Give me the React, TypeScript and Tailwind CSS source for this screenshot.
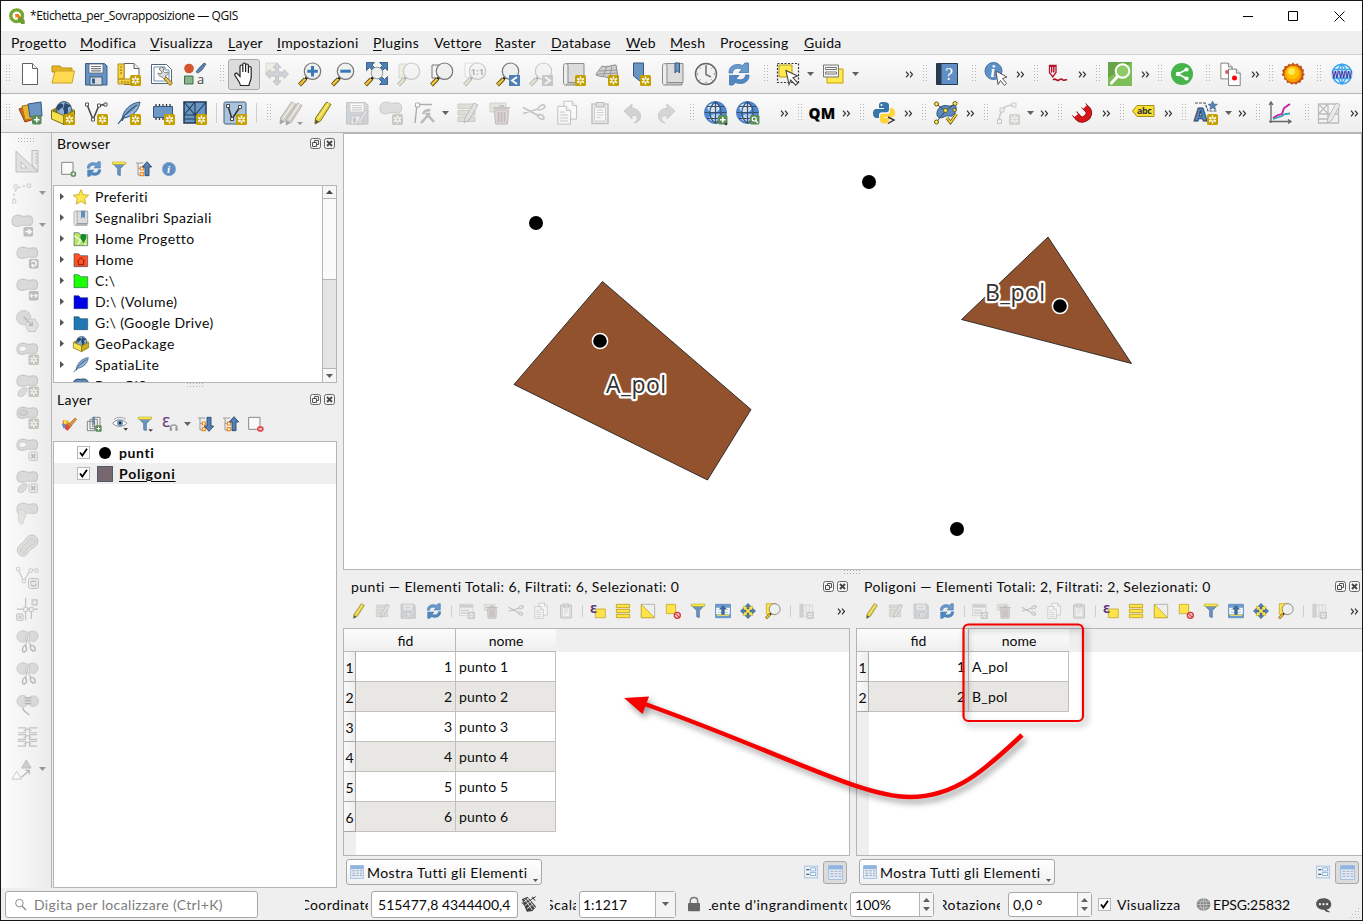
import React, { type ReactNode } from "react";

/* ---------- shared drawing parts ---------- */

const Spark = ({ x = 13, y = 13, c = "#c4a000" }: { x?: number; y?: number; c?: string }) => (
  <g transform={`translate(${x} ${y})`}>
    <rect width="11" height="11" rx="1.5" fill={c} />
    <path d="M5.5 1.6v7.8M2.1 3.5l6.8 4M8.9 3.5l-6.8 4" stroke="#fff" strokeWidth="1.5" />
    <circle cx="5.5" cy="5.5" r="1.2" fill={c} />
  </g>
);

const Plus = ({ x = 14, y = 14 }: { x?: number; y?: number }) => (
  <g transform={`translate(${x} ${y})`}>
    <rect width="9.5" height="9.5" rx="1.8" fill="#5a8c5a" />
    <path d="M4.75 2v5.5M2 4.75h5.5" stroke="#fff" strokeWidth="1.5" />
  </g>
);

const Handle = () => (
  <>
    <path d="M9 15.5L7 17.5" stroke="#222" strokeWidth="2.6" />
    <path d="M7.3 17L1.5 23" stroke="#55450a" strokeWidth="4" />
    <path d="M7.3 17L1.8 22.7" stroke="#f5c53a" strokeWidth="2.4" />
  </>
);

const Lens = ({ children, fill = "#eef0ee" }: { children?: ReactNode; fill?: string }) => (
  <>
    <Handle />
    <circle cx="14.5" cy="9.2" r="8.2" fill={fill} stroke="#777" strokeWidth="1.2" />
    {children}
  </>
);

const Blob = () => (
  <path
    d="M1 7.5C1 1.500 6.500 0 11 2C14 3.300 16.500 1.500 19 2C24 3 23.500 11.500 19 12C15.500 12.300 14 10.500 10.500 12C6 14 1 13 1 7.500z"
    fill="#bcc2bc"
    stroke="#98a098"
    strokeWidth="1.200"
  />
);

const Globe = () => (
  <>
    <circle cx="11.500" cy="11.500" r="11" fill="#4f8ad6" />
    <ellipse cx="9.500" cy="7" rx="6" ry="4.500" fill="#fff" opacity=".75" />
    <ellipse cx="12" cy="17" rx="7" ry="4" fill="#d3e6fb" opacity=".8" />
    <path
      d="M11.500.5v22M.5 11.500h22M2.800 5.500h17.400M2.800 17.500h17.400M11.500.5c-7.500 6-7.500 16 0 22M11.500.5c7.500 6 7.500 16 0 22"
      fill="none"
      stroke="#3a4f68"
      strokeWidth="1.200"
    />
    <circle cx="11.500" cy="11.500" r="11" fill="none" stroke="#3d6fb0" strokeWidth=".8" />
  </>
);

const Cursor = () => (
  <path d="M10 8.500l11.500 5.500-4.500 1.800 5 5.200-2.300 2.200-5-5.200-1.700 4.500z" fill="#fff" stroke="#444" strokeWidth="1.100" />
);

const Refresh = () => (
  <>
    <path d="M2 11C1.500 4 9 .5 15.500 3.500L18 1h3.500v9.500H12l3-3.200C11 5 5.500 6.500 5.500 11z" fill="#6a9bcc" stroke="#3f74ae" strokeWidth=".8" />
    <path d="M22 13c.5 7-7 10.500-13.500 7.500L6 23H2.500v-9.500H12l-3 3.200c4 2.300 9.500.8 9.500-3.700z" fill="#5288c0" stroke="#3f74ae" strokeWidth=".8" />
  </>
);

const Pencil = ({ f = "#e3cf3c" }: { f?: string }) => (
  <>
    <path d="M4.500 17L15.500 1l4.500 2.500L9.500 20 4 23z" fill={f} stroke="#827a24" strokeWidth="1" />
    <path d="M6.800 18L17.600 2.200" stroke="#fff59a" strokeWidth="1.200" />
    <path d="M4.500 18.500L4 23l4-2.300z" fill="#555" />
  </>
);

const Floppy = () => (
  <>
    <path d="M1.500 1.500h19l2.500 2.500v19H1.500z" fill="#6393c6" stroke="#3a5f8b" />
    <path d="M5 2h14v9H5z" fill="#fff" stroke="#567" strokeWidth=".8" />
    <path d="M7 4.500h10M7 6.700h10M7 8.900h10" stroke="#777" strokeWidth="1.200" />
    <path d="M6 15h12v8H6z" fill="#d9dde1" stroke="#345" strokeWidth=".8" />
    <path d="M8 16.500h3v5H8z" fill="#345f91" />
  </>
);

const Page = ({ x = 0, y = 0, s = 1 }: { x?: number; y?: number; s?: number }) => (
  <g transform={`translate(${x} ${y}) scale(${s})`}>
    <path d="M4.500 1.500h10l5 5v16h-15z" fill="#fff" stroke="#606060" />
    <path d="M14.500 1.500v5h5" fill="#eee" stroke="#606060" />
  </g>
);

const Trash = () => (
  <>
    <path d="M2 2h16v9H2z" fill="#d4d0a8" stroke="#aaa68a" />
    <path d="M6.500 9h14l-1 14h-12z" fill="#e0a8a8" stroke="#a76868" />
    <path d="M5 7h17M11 5h5M10.500 11v10M13.500 11v10M16.500 11v10" stroke="#a76868" strokeWidth="1.500" />
  </>
);

const Cut = () => (
  <path
    d="M1 6.500l15 8M1 12.500l15-4.500M16 14c2-1.500 6 .5 6 3s-5 1-6.500-2zM15.500 8.500C16 5 21 3 22.500 4.500s-2 5-6.500 4.500"
    fill="none"
    stroke="#888"
    strokeWidth="1.600"
  />
);

const EditRows = () => (
  <>
    <path d="M2 3h17v4.500H2zM2 9.500h17V14H2zM2 16h17v4.500H2z" fill="#c9c89e" stroke="#999a77" />
    <path d="M9 17L18 2l4 2-9 15-5 3z" fill="#ccc" stroke="#777" />
  </>
);

const Funnel = () => (
  <>
    <path d="M2 3h20l-8 8.500V22l-4-1.500v-9z" fill="#6a94c2" stroke="#4a709b" />
    <path d="M2 1.500h20V5H2z" fill="#fcec50" stroke="#b5a01e" strokeWidth=".8" />
  </>
);

const Globelet = () => (
  <>
    <path d="M.5 9L8 5l15.500 3.500-11 7.500z" fill="#8e8028" />
    <circle cx="13" cy="8" r="7.500" fill="#8fb1d8" stroke="#345" strokeWidth=".8" />
    <path d="M8 3c3-1 5 0 4 2.500s-3 1-4 4.500c-2-1-2.500-3-2-5zM14 1c1 3 5 1 6 5-2-1-4 0-3 3 1 2-1 4-3 6-2-3 0-5-2-7z" fill="#2b4a70" />
    <path d="M.5 9.500L13 14.500v9L.5 18z" fill="#f5e14d" stroke="#7c6c12" />
    <path d="M23.500 9.500L13 14.500v9l10.500-6z" fill="#cfae1c" stroke="#7c6c12" />
  </>
);

const Feather = () => (
  <>
    <path d="M5 20C5 10 13 2 23 1c-1 6-4 12-12 15l-4 1z" fill="#7fa6cf" stroke="#33597f" />
    <path d="M1 23C6 16 12 9 20 4" fill="none" stroke="#33506c" strokeWidth="1.100" />
    <path d="M8 15c5-1 9-4 12-9" stroke="#b9d0e8" fill="none" />
  </>
);

const Tree = ({ up }: { up?: boolean }) => (
  <>
    <path d="M0 3h11M3 3v18h4M3 11h4" fill="none" stroke="#999" strokeWidth="1.500" />
    <path d="M6.500 9h4.500v4.500H6.500zM6.500 17.500h4.500v4.500H6.500z" fill="#fff" stroke="#ee8a1c" strokeWidth="1.800" />
    {up ? (
      <path d="M16.500 1l7 8h-4v13h-6V9h-4z" fill="#5580b0" stroke="#1f4370" strokeWidth="1.300" />
    ) : (
      <path d="M16.500 23l7-8h-4V2h-6v13h-4z" fill="#5580b0" stroke="#1f4370" strokeWidth="1.300" />
    )}
  </>
);

const Clip = () => (
  <>
    <path d="M4 3h16v19.500H4z" fill="#ddd" stroke="#777" strokeWidth="1.500" />
    <path d="M6.500 6h11v14h-11z" fill="#fff" stroke="#999" />
    <path d="M8 1.500h8V6H8z" fill="#bbb" stroke="#666" />
    <path d="M8.500 9h7M8.500 11.500h7M8.500 14h7M8.500 16.500h4" stroke="#999" />
  </>
);

const Gray = ({ children, o = "opacity-35" }: { children: ReactNode; o?: string }) => (
  <g className={`grayscale-[70%] ${o}`}>{children}</g>
);

const Sheet = () => (
  <>
    <path d="M5 1.500h17v19H5z" fill="#dcdcdc" stroke="#8b8b8b" />
    <path d="M1.500 3.500C1.500 1 6 1 6 3.500V20c0 2-1 3-2.500 3s-2-1-2-3z" fill="#ececec" stroke="#8b8b8b" />
    <path d="M4 23h17v-2.500H6" fill="#c5c5c5" stroke="#8b8b8b" />
  </>
);

const TableGrid = () => (
  <>
    <path d="M1 1h22v22H1z" fill="#e4edf7" stroke="#9dbbdd" strokeWidth="1.500" />
    <path d="M1 1h22v6H1z" fill="#8fb5de" />
    <path d="M4 10h5M11 10h4M17 10h4M4 14h5M11 14h4M17 14h4M4 18h5M11 18h4M17 18h4" stroke="#9aa8b6" strokeWidth="1.800" />
  </>
);

const Folder = ({ f }: { f: string }) => (
  <path d="M1.500 2.500h7l3 3H22v16.500H1.500z" fill={f} stroke="#1c3a55" strokeOpacity=".65" strokeWidth="1.200" />
);

const Cross = ({ x = 13, y = 14 }: { x?: number; y?: number }) => (
  <g transform={`translate(${x} ${y})`}>
    <rect x=".5" y=".5" width="9" height="9" rx="1.500" fill="#e9dede" stroke="#a99" />
    <path d="M2.800 2.800l4.400 4.400M7.200 2.800L2.800 7.200" stroke="#a77" strokeWidth="1.600" />
  </g>
);

const Scis = () => (
  <>
    <path d="M11 1.500C5-1 1 3 1 7s4 7 9 5zM13.500 2c6-2 10 0 9.500 5s-6 6-9 4z" fill="#bcc2bc" stroke="#98a098" />
    <path d="M13 2l-3 15M12 10l4 7" stroke="#999" strokeWidth="1.300" />
    <path d="M10 16c-2 0-4 4-3 6s4 0 4-2zM15 16c3-1 6 3 5 5s-5 0-5-3z" fill="none" stroke="#a77" strokeWidth="1.600" />
  </>
);

const icons: Record<string, ReactNode> = {
  page: <Page />,
  folder: (
    <>
      <path d="M1 4h8l2 2h10v4H1z" fill="#e6b422" stroke="#b98e12" />
      <path d="M4 9h19.500l-2.500 12H1z" fill="#ffd94f" stroke="#c9a227" />
    </>
  ),
  floppy: <Floppy />,
  layout: (
    <>
      <Page x={2.500} s={1} />
      <path d="M1 2h6v15H1zM1 17h14v5H1z" fill="#f7d344" stroke="#b3901c" />
      <path d="M3 5h2M3 8h2M3 11h2M5 19v2M8 19v2M11 19v2" stroke="#8a6d0e" />
      <Spark />
    </>
  ),
  tools: (
    <>
      <path d="M1.500 2.500h15l5 5v14h-20z" fill="#fff" stroke="#567" />
      <path d="M4 5h11v3h4v11H4z" fill="none" stroke="#6c8fb8" />
      <path d="M9 7c1-2 4-2 5-1l-1 3 2 2 3-1c1 2-1 4-3 4L22 21l-2 2-8-8c-2 0-4-2-4-4l3 1 1-2z" fill="#ddd" stroke="#777" strokeWidth=".9" />
      <path d="M16 15l6.500 6-2.500 2.500-6-6.500z" fill="#e8bf49" stroke="#87681b" strokeWidth=".9" />
    </>
  ),
  style: (
    <>
      <circle cx="6" cy="6.500" r="4.800" fill="#d4552c" />
      <path d="M13 10l3-4 5-5 2 1-4 6-4 3z" fill="#5a83b0" stroke="#38567a" strokeWidth=".7" />
      <path d="M1.500 14h8.500v8H1.500z" fill="#8ab58a" stroke="#3f6f4a" />
      <text x="14" y="22" fontSize="13" fontFamily="Open Sans" fill="#444">a</text>
    </>
  ),
  hand: (
    <path
      d="M8 12V4.500c0-2 2.800-2 2.800 0V10 2.500c0-2 2.800-2 2.800 0V10 3.500c0-2 2.800-2 2.800 0V11 6c0-2 2.800-2 2.800 0v9c0 4-2 5.500-2.200 8.500H8.500C8 20 5 17 3 13.500c-1-2.200 1.500-3.200 3-1.200l2 2.200z"
      fill="#fff"
      stroke="#222"
      strokeWidth="1.200"
    />
  ),
  pan: (
    <Gray>
      <path d="M1 1h11v11H1z" fill="#efe06a" stroke="#999" />
      <path d="M12 1l4 4.500h-2.500v4.500H19V7.500l4.500 4.500-4.500 4.500V14h-5.500v5H16l-4 4.500L8 19h2.500v-5H5v2.500L.5 12 5 7.500V10h5.500V5.500H8z" fill="#7799c0" stroke="#4b6b91" />
    </Gray>
  ),
  zin: <Lens><path d="M14.500 4v10.500M9.300 9.200h10.500" stroke="#3c78b4" strokeWidth="3" /></Lens>,
  zout: <Lens><path d="M9.300 9.200h10.500" stroke="#3c78b4" strokeWidth="3" /></Lens>,
  zfull: (
    <>
      <path d="M2.500.5h8L8 3l4 4-2.500 2.500-4-4-3 3zM23.500.5v8L21 6l-4 4-2.500-2.500 4-4-3-3zM23.500 22.500h-8L18 20l-4-4 2.500-2.500 4 4 3-3z" fill="#4d80b5" stroke="#274d78" strokeWidth=".8" />
      <Handle />
      <circle cx="13" cy="11" r="5.800" fill="#eef0ee" stroke="#999" />
    </>
  ),
  zsel: <Gray><path d="M2 2h12v14H2z" fill="#f3e26c" stroke="#999" /><Lens /></Gray>,
  zlayer: <><path d="M2 3h11v13H2z" fill="#f4f4f4" stroke="#777" /><Lens /></>,
  znat: (
    <Gray>
      <path d="M2 1h13v14H2z" fill="#fff" stroke="#aaa" />
      <Lens><text x="7.500" y="13" fontSize="9.500" fontWeight="700" fontFamily="Open Sans" fill="#333">1:1</text></Lens>
    </Gray>
  ),
  zlast: <><Lens /><path d="M13 13h11v11H13z" fill="#4d80b5" /><path d="M21 15l-5 3.500 5 3.500" fill="none" stroke="#fff" strokeWidth="1.800" /></>,
  znext: <Gray><Lens /><path d="M13 13h11v11H13z" fill="#777" /><path d="M16 15l5 3.500-5 3.500" fill="none" stroke="#fff" strokeWidth="1.800" /></Gray>,
  newmap: <><Sheet /><Spark /></>,
  map3d: (
    <>
      <path d="M1 13C3 8 6 6 7 4c5 2 9-1 14-1l2 12-9 1c-4-2-9-1-13-3z" fill="#cfcfcf" stroke="#888" />
      <path d="M4 9l18-1M2.500 12l20-1M12 3.500L8 15M17 3L15 15" stroke="#999" fill="none" />
      <Spark />
    </>
  ),
  ribbon: <><path d="M3.500 1h10v20l-5-3-5-4z" fill="#6a94c2" stroke="#33597f" /><Spark x={10} /></>,
  bookmark: <><Sheet /><path d="M14 1h4.500v10l-2.250-2.500L14 11z" fill="#6a94c2" stroke="#33597f" /></>,
  clock: (
    <>
      <circle cx="12" cy="12" r="10.500" fill="#f1f1f1" stroke="#666" strokeWidth="1.400" />
      <path d="M12 4v8.500l5 2.500" fill="none" stroke="#777" strokeWidth="1.600" />
      <path d="M12 2.800v1.500M12 19.700v1.500M2.800 12h1.500M19.700 12h1.500M5.500 5.500l1 1M17.500 17.500l1 1M18.500 5.500l-1 1M5.500 18.500l1-1" stroke="#3f74ae" />
    </>
  ),
  refresh: <Refresh />,
  select: (
    <>
      <path d="M1.500 1.500h21v19h-21z" fill="none" stroke="#333" strokeWidth="1.200" strokeDasharray="2 1.500" />
      <path d="M3 3h13v12H3z" fill="#ffe94f" stroke="#b59f1b" />
      <Cursor />
    </>
  ),
  forms: (
    <>
      <path d="M5 7h16v14H5z" fill="#ffe94f" stroke="#c4a000" />
      <path d="M1.500 3h15v12h-15z" fill="#f4f4f4" stroke="#777" />
      <path d="M3.500 5.500h11v2h-11zM3.500 10h11v2h-11z" fill="#fff" stroke="#777" />
    </>
  ),
  help: (
    <>
      <path d="M1.500 1.500h21v21h-21z" fill="#5f8fc4" stroke="#26394d" />
      <path d="M2 2h4.500v20H2z" fill="#293b4e" />
      <text x="10" y="18" fontSize="16" fontFamily="DejaVu Serif" fill="#fff" textLength="8" lengthAdjust="spacingAndGlyphs">?</text>
    </>
  ),
  identify: (
    <>
      <circle cx="9.500" cy="9" r="8.500" fill="#5f90c6" stroke="#4474a8" />
      <text x="6.500" y="15" fontSize="16" fontStyle="italic" fontWeight="700" fontFamily="Liberation Serif" fill="#fff">i</text>
      <path d="M12 9l11 6-4.500 1.500 4 5-2 2-4-5-2.500 4z" fill="#fff" stroke="#555" />
    </>
  ),
  redpen: (
    <>
      <path d="M3.500 3.500h6.500v7l-3.250 4.500-3.250-4.500z" fill="#fff" stroke="#b01024" strokeWidth="1.300" />
      <path d="M5.700 3.500v7M7.800 3.500v7M3.500 4h6.500" stroke="#b01024" strokeWidth="1.400" />
      <path d="M7 18c3-3 3 2 6 0s2-1 4 0 2-1 4 0" fill="none" stroke="#b01024" strokeWidth="1.600" />
    </>
  ),
  greenmag: (
    <>
      <path d="M0 0h24v24H0z" fill="#7dbd57" />
      <path d="M0 0h24L0 16z" fill="#68a548" />
      <circle cx="14.500" cy="9" r="6.800" fill="#8ccb66" stroke="#fff" strokeWidth="2" />
      <path d="M9.500 14.500L3.500 21" stroke="#fff" strokeWidth="3.200" strokeLinecap="round" />
    </>
  ),
  share: (
    <>
      <circle cx="12" cy="12" r="11" fill="#45b549" />
      <path d="M16.500 7.500L8 12l8.500 4.500" fill="none" stroke="#fff" strokeWidth="1.600" />
      <circle cx="16.500" cy="7.500" r="2.100" fill="#fff" /><circle cx="8" cy="12" r="2.300" fill="#fff" /><circle cx="16.500" cy="16.500" r="2.100" fill="#fff" />
    </>
  ),
  docs: (
    <>
      <Page x={-1.500} y={0} s={0.75} />
      <circle cx="8" cy="10" r="2" fill="#e55" />
      <Page x={6} y={6} s={0.78} />
      <circle cx="15.500" cy="16" r="2.500" fill="#f00" />
    </>
  ),
  sun: (
    <>
      <path d="M12 .5l2 2 2.500-1.200L18 3.700l2.700.1.300 2.700 2.200 1.500-.9 2.500 1.500 2-1.700 2.100.6 2.600-2.500 1-.6 2.600-2.700-.1-1.700 2.100-2.300-1.400-2.300 1.400-2-2-2.600.1-.6-2.600-2.500-1 .6-2.600L.5 13l1.500-2.200L1 8.300l2.200-1.500.3-2.700 2.700-.1L7.700 1.700 10 2.500z" fill="#c2571a" />
      <circle cx="12" cy="12" r="8.500" fill="#ff9d00" />
      <circle cx="11.500" cy="11" r="6.500" fill="#ffc400" />
      <circle cx="10.500" cy="9.500" r="3.500" fill="#ffe95a" />
    </>
  ),
  www: (
    <>
      <circle cx="12" cy="12" r="9.800" fill="#e9f5ff" stroke="#39a2ea" strokeWidth="1.500" />
      <path d="M12 2v20M3 7.500h18M3 16.500h18M12 2c-6 6-6 14 0 20M12 2c6 6 6 14 0 20" stroke="#39a2ea" strokeWidth="1.300" fill="none" />
      <path d="M1.500 9h21v6h-21z" fill="#d5eaff" />
      <text x="2" y="15.500" fontSize="12" fontWeight="700" fontFamily="Liberation Sans" fill="#2a2a9c" textLength="20" lengthAdjust="spacingAndGlyphs">www</text>
    </>
  ),
  dsm: (
    <>
      <path d="M1 8l11-4 5 14-10 3z" fill="#d9642c" stroke="#963c12" />
      <path d="M4 5l12-2 2 14-11 2z" fill="#e9b22f" stroke="#a37913" />
      <path d="M10 3l13-2 1 14-12 1z" fill="#6a94c2" stroke="#33597f" />
      <Plus />
    </>
  ),
  gpkg: <><Globelet /><Spark /></>,
  vnew: (
    <>
      <path d="M3 3.500l6 15L15 4.500l6-1" fill="none" stroke="#444" strokeWidth="1.500" />
      <path d="M1.500 2h3v3h-3zM13.500 3h3v3h-3zM20 2h3v3h-3zM7.500 17h3v3h-3z" fill="#fff" stroke="#555" />
      <Spark />
    </>
  ),
  feather: <><Feather /><Spark /></>,
  chip: (
    <>
      <path d="M5 3v16M8.500 3v16M12 3v16M15.500 3v16M19 3v16" stroke="#333" strokeWidth="1.300" />
      <path d="M2.500 5.500h19v11h-19z" fill="#6d97c7" stroke="#33597f" />
      <Spark />
    </>
  ),
  mesh: (
    <>
      <path d="M1 1h22v21H1z" fill="#6a94c2" stroke="#203a58" strokeWidth="1.500" />
      <path d="M1 14h22M12 1v21M1 1l11 13M23 1L12 14M1 14L12 1M1 18h11" stroke="#203a58" strokeWidth="1.100" fill="none" />
      <Spark />
    </>
  ),
  virtual: (
    <>
      <rect x="1" y="1" width="22" height="22" rx="1.500" fill="#aac4de" stroke="#44617f" />
      <path d="M5 5l4 13L17 6" fill="none" stroke="#333" strokeWidth="1.600" />
      <path d="M3.500 3.500h3v3h-3zM15.500 4.500h3v3h-3zM7.500 16.500h3v3h-3z" fill="#fff" stroke="#444" />
      <Spark />
    </>
  ),
  pencils: (
    <>
      <Gray o="opacity-50"><g transform="translate(-3 0)"><Pencil f="#b8a8a0" /></g><g transform="translate(3 1)"><Pencil f="#b8a8a0" /></g></Gray>
      <path d="M18 21h6l-3 3z" fill="#999" />
    </>
  ),
  pencil: <Pencil />,
  floppyG: <Gray o="opacity-30"><Floppy /><path d="M13 20L20 9l3 1.500-7 11-4 2z" fill="#caa" stroke="#855" /></Gray>,
  blobStar: <Gray o="opacity-45"><Blob /><Spark c="#a79a62" /></Gray>,
  vertexTool: (
    <Gray o="opacity-45">
      <path d="M5 3.500L3 22M5 3.500h15" stroke="#555" strokeWidth="1.400" />
      <path d="M3.500 2h4v4h-4z" fill="#fff" stroke="#555" />
      <path d="M9 22l9-10M14 12l8 9M11 13c1-3 5-5 7-3" fill="none" stroke="#777" strokeWidth="2.600" />
    </Gray>
  ),
  editRows: <Gray o="opacity-45"><EditRows /></Gray>,
  trash: <Gray o="opacity-45"><Trash /></Gray>,
  cut: <Gray o="opacity-45"><Cut /></Gray>,
  copy: (
    <Gray o="opacity-40">
      <Page x={5} y={-1} s={0.85} />
      <Page x={-1} y={4} s={0.85} />
      <path d="M5 11h5M5 14h8M5 17h8M5 20h8" stroke="#888" />
    </Gray>
  ),
  clip: <Gray o="opacity-40"><Clip /></Gray>,
  undo: <Gray o="opacity-45"><path d="M3 10l8-7v4.500c10-.5 12 13 2 14.500 6-4 3-8-2-7.500V18z" fill="#b9a5a5" stroke="#999" /></Gray>,
  redo: <Gray o="opacity-45"><path d="M21 10l-8-7v4.500C3 7 1 20.500 11 22c-6-4-3-8 2-7.500V18z" fill="#a5b5a5" stroke="#999" /></Gray>,
  globeAdd: <><Globe /><Plus x={14} y={14} /><path d="M20 22.500h4l-2 2z" fill="#222" /></>,
  globeFind: (
    <>
      <Globe />
      <rect x="14" y="14" width="9.500" height="9.500" rx="1.500" fill="#5a8c5a" />
      <circle cx="18.200" cy="18" r="2" fill="none" stroke="#fff" strokeWidth="1.200" />
      <path d="M19.800 19.800l2.200 2.200" stroke="#fff" strokeWidth="1.300" />
    </>
  ),
  python: (
    <>
      <path d="M11.500 1C7 1 7 3 7 5v2h5v1H4.500C1.500 8 1 10.500 1 12.500S2 17 4.500 17H7v-3c0-2 1-2.800 3-2.800h4.500c1.500 0 2.500-1 2.500-2.700V4c0-2-2-3-5.500-3z" fill="#3775a9" />
      <path d="M12.500 22.500C17 22.500 17 20.500 17 18.500V17h-5v-1h7.500c3 0 3.500-2.500 3.500-4.500S22 7 19.500 7H18v3c0 2-1 2.800-3 2.800h-4.500C9 12.800 8 13.500 8 15.500V19c0 2 1.500 3.500 4.500 3.500z" fill="#ffd43b" />
      <circle cx="9.500" cy="4" r="1" fill="#fff" />
      <path d="M16 16l6 3-6 3.500" fill="none" stroke="#333" strokeWidth="1.400" />
    </>
  ),
  topo: (
    <>
      <path d="M3 14C2 7 9 3 14 5c3 1 5-2 7-1 3 4 0 9-3 11-2 1-3-1-6 0-4 2-8 3-9-1z" fill="#5a89bf" stroke="#2d5482" />
      <path d="M2.500 3l9 7 9-7M11.500 10L2.500 21" stroke="#444" fill="none" />
      <circle cx="2.500" cy="3" r="2" fill="#ffe94f" stroke="#665c10" /><circle cx="21" cy="2.500" r="2" fill="#ffe94f" stroke="#665c10" />
      <circle cx="11.500" cy="9.500" r="2" fill="#ffe94f" stroke="#665c10" /><circle cx="2.500" cy="21" r="2" fill="#ffe94f" stroke="#665c10" />
      <circle cx="20.500" cy="9" r="1.600" fill="#ffe94f" stroke="#665c10" />
      <path d="M13 17l3.500 4.500L22.500 13" fill="none" stroke="#55450a" strokeWidth="3" />
      <path d="M13 17l3.500 4.500L22.500 13" fill="none" stroke="#ffd93b" strokeWidth="1.500" />
    </>
  ),
  curveG: (
    <Gray>
      <path d="M3 20C4 8 9 4 18 4" fill="none" stroke="#777" strokeWidth="1.500" />
      <path d="M1.500 18.500h4v4h-4zM4 7h4v4H4zM16 2h4v4h-4z" fill="#eee" stroke="#777" />
      <Spark c="#a79a62" />
    </Gray>
  ),
  magnet: (
    <>
      <path d="M4.500 12.500L8.500 17C13 22 22.500 14 17.500 8.500L13.500 4.500" fill="none" stroke="#7d0d10" strokeWidth="6.400" />
      <path d="M4.500 12.500L8.500 17C13 22 22.500 14 17.500 8.500L13.500 4.500" fill="none" stroke="#d8151a" strokeWidth="5" />
      <path d="M4 12l2.200 2.500M13 4l2 2" stroke="#fff" strokeWidth="4.800" />
    </>
  ),
  abc: (
    <>
      <path d="M6 4.500h17v11H6L1.500 10z" fill="#f7df33" stroke="#a68f13" />
      <text x="6" y="13" fontSize="9" fontWeight="700" fontFamily="Open Sans" fill="#333" textLength="15">abc</text>
    </>
  ),
  aNew: (
    <>
      <path d="M1 2h10l3 8h9" fill="none" stroke="#456" strokeWidth="1.200" strokeDasharray="3 1" />
      <path d="M18.500 0l1.500 3 3.500.3-2.700 2.200.9 3.200-3.200-1.800-2.700 1.800.7-3.200L14 3.300l3.200-.3z" fill="#5a83b0" stroke="#33597f" strokeWidth=".5" />
      <text x="0" y="20" fontSize="18" fontWeight="800" fontFamily="Open Sans" fill="#5a86b8" stroke="#27496f" strokeWidth="1">A</text>
      <Spark />
    </>
  ),
  chart: (
    <>
      <path d="M3 22V2M1 20.500h21M1 4l2-3 2 3M20 18.500l3 2-3 2" fill="none" stroke="#666" strokeWidth="1.300" />
      <path d="M5 17l5-3 4-1 2-6 6-4" fill="none" stroke="#c7189e" strokeWidth="1.800" />
      <path d="M5 18l6-2 3-1 3-2 5-.5" fill="none" stroke="#37a3b0" strokeWidth="1.800" />
    </>
  ),
  meshEdit: (
    <Gray o="opacity-45">
      <path d="M1.500 3h20v19h-20zM1.500 13h20M11 3v19M1.500 3l10 10M11 3L1.500 13M1.500 18h10" fill="none" stroke="#777" strokeWidth="1.300" />
      <path d="M11 17L19 2l4 2-8 15-5 3z" fill="#ddd" stroke="#777" />
    </Gray>
  ),
  /* advanced digitizing column */
  setsquare: (
    <Gray o="opacity-50">
      <path d="M1 2v21h22z" fill="#d6cebe" stroke="#888" />
      <path d="M6 13v6h6z" fill="#f5f5f5" stroke="#888" />
      <path d="M17 1.500h6v21L17 16z" fill="#e8e0d0" stroke="#888" />
      <path d="M20 5h3M20 8h3M20 11h3M20 14h3" stroke="#888" />
    </Gray>
  ),
  arcG: (
    <Gray>
      <path d="M3 20C2 9 6 4 18 4" fill="none" stroke="#888" strokeDasharray="3 2" strokeWidth="1.500" />
      <path d="M1.500 18.500h3.500V22H1.500zM3 3h3.500v3.500H3zM17 2h3.500v3.500H17z" fill="#eee" stroke="#888" />
    </Gray>
  ),
  blobMove: <Gray o="opacity-50"><Blob /><rect x="13" y="13.500" width="10" height="10" rx="1.500" fill="#888" /><path d="M15 18.500h5M18 16l3 2.500-3 2.500" fill="none" stroke="#fff" strokeWidth="1.800" /></Gray>,
  blobRot: <Gray o="opacity-50"><Blob /><rect x="13.500" y="13.500" width="10" height="10" rx="1.500" fill="#888" /><path d="M16 17c2-3 6-1 5 2s-4 2-4 1M18 22l-1.500-2 2-1" fill="none" stroke="#fff" strokeWidth="1.500" /></Gray>,
  blobScale: <Gray o="opacity-50"><Blob /><rect x="13.500" y="13.500" width="10" height="10" rx="1.500" fill="#888" /><path d="M15.500 18.500h6M17 16.500l-2 2 2 2M20 16.500l2 2-2 2" fill="none" stroke="#fff" strokeWidth="1.200" /></Gray>,
  hex: (
    <Gray o="opacity-50">
      <circle cx="8" cy="8" r="7.500" fill="#bcc2bc" stroke="#98a098" />
      <path d="M13 9.500h7l3.500 6.500-3.500 6.500h-7L9.500 16z" fill="#ccd1cc" stroke="#98a098" />
      <path d="M8 7l9 9M17 12v4h-4" fill="none" stroke="#777" strokeWidth="1.300" />
    </Gray>
  ),
  ring: <Gray o="opacity-50"><Blob /><ellipse cx="7" cy="7" rx="4" ry="3" fill="#f5f5f5" stroke="#98a098" /><Spark c="#a79a62" /></Gray>,
  part: <Gray o="opacity-50"><Blob /><path d="M2 22c0-5 4-8 9-7.500 2 2-2 8.500-5 9s-4-1-4-1.500z" fill="#bcc2bc" stroke="#98a098" /><Spark c="#a79a62" /></Gray>,
  fillRing: <Gray o="opacity-50"><Blob /><ellipse cx="7.500" cy="7" rx="4.500" ry="3" fill="#aab0aa" stroke="#868e86" /><Spark c="#a79a62" /></Gray>,
  ringDel: <Gray o="opacity-50"><Blob /><ellipse cx="7" cy="7" rx="4" ry="3" fill="#f5f5f5" stroke="#98a098" /><Cross /></Gray>,
  partDel: <Gray o="opacity-50"><Blob /><path d="M2 22c0-5 4-8 9-7.500 2 2-2 8.500-5 9s-4-1-4-1.500z" fill="#bcc2bc" stroke="#98a098" /><Cross /></Gray>,
  reshape: <Gray o="opacity-45"><Blob /><path d="M2 9c2-2 7-1 8 3s-2 4-2 8-4 4-5 0 0-5-1-11z" fill="#cfcfb4" stroke="#a6a68a" /></Gray>,
  offset: (
    <Gray o="opacity-50">
      <path d="M3 21C-1 16 3 12 7 9C10 7 11 1 17 1C24 2 24 10 20 13C17 15 14 16 12 20C10 24 6 24 3 21z" fill="#cfcfb4" stroke="#8e8e72" />
      <path d="M5 19C3 16 6 13 9 11C12 9 13 4 17 4C21 5 21 9 18 11C15 13 12 14 10 18C9 21 7 21 5 19z" fill="#bcc2bc" stroke="#98a098" />
    </Gray>
  ),
  simp: (
    <Gray>
      <path d="M2 3l6 13 7-12 7 0" fill="none" stroke="#888" strokeWidth="1.300" />
      <path d="M.5 1.500H4V5H.5zM13.500 3H17v3.500h-3.500zM20 3h3v3.500h-3zM6.500 14H10v3.500H6.500z" fill="#eee" stroke="#888" />
      <rect x="13" y="13" width="10.500" height="10.500" rx="2" fill="#ddd" stroke="#666" /><path d="M15 18c1-3 5-3 6-1M21.500 18.500c-1 3-5 3-6 1" stroke="#666" fill="none" strokeWidth="1.500" />
    </Gray>
  ),
  crossLines: (
    <Gray o="opacity-45">
      <path d="M10 0v23M1 11.500h22M16 11v11" stroke="#888" strokeWidth="1.300" />
      <path d="M8 10h4v4H8zM14 10h4v4h-4z" fill="#eee" stroke="#888" />
      <rect x="16" y="1" width="7" height="7" rx="1" fill="#aaa88c" /><path d="M19.500 2.500v4M17.500 4.500h4" stroke="#fff" />
      <rect x=".5" y="16.500" width="7" height="7" rx="1" fill="#d9c9c9" stroke="#a88" /><path d="M2.500 18.500l3 3M5.500 18.500l-3 3" stroke="#a77" />
    </Gray>
  ),
  scis: <Gray o="opacity-50"><Scis /></Gray>,
  merge: <Gray o="opacity-50"><circle cx="7" cy="7.500" r="6" fill="#bcc2bc" stroke="#98a098" /><circle cx="18" cy="7.500" r="5.500" fill="#bcc2bc" stroke="#98a098" /><path d="M9 4h7M9 7h7M9 10h7M7 14c0 4 4 5 7 8" fill="none" stroke="#777" strokeWidth="1.300" /></Gray>,
  snapRows: <Gray o="opacity-45"><path d="M2 2h8v5H2M22 2h-8v5h8M2 9h8v5H2M22 9h-8v5h8M2 16h8v5H2M22 16h-8v5h8M8 5l4-2 4 2M8 12l4-2 4 2M8 19l4-2 4 2" fill="none" stroke="#888" strokeWidth="1.200" /></Gray>,
  triMove: <Gray o="opacity-50"><path d="M16 2l5 8.500H11z" fill="#aaa" stroke="#888" /><path d="M6 14l5 8H1z" fill="#fff" stroke="#999" /><path d="M11 20l8-7M15 13h4v4" fill="none" stroke="#777" strokeWidth="1.300" /></Gray>,
  /* small panel icons */
  addLayer: <><path d="M1 2h17v18H1z" fill="#fafafa" stroke="#777" strokeWidth="1.300" /><circle cx="18.500" cy="19.500" r="4.300" fill="#5a8c5a" /><path d="M18.500 17v5M16 19.500h5" stroke="#fff" strokeWidth="1.300" /></>,
  removeLayer: <><path d="M1 2h17v18H1z" fill="#fafafa" stroke="#777" strokeWidth="1.300" /><rect x="13.500" y="15.500" width="10" height="8" rx="3.500" fill="#e0484c" /><path d="M16 19.500h5" stroke="#fff" strokeWidth="1.800" /></>,
  funnel: <Funnel />,
  funnelD: <><Funnel /><path d="M17 20h7l-3.500 3.500z" fill="#444" /></>,
  treeUp: <Tree up />,
  treeDown: <Tree />,
  info: <><circle cx="12" cy="12" r="10" fill="#5f8fc4" stroke="#7ba5d2" /><text x="9" y="18" fontSize="17" fontStyle="italic" fontWeight="700" fontFamily="Liberation Serif" fill="#fff">i</text></>,
  star: <path d="M12 1l3.300 7.500 8.200.8-6.200 5.400 1.900 8L12 18.500l-7.200 4.200 1.900-8L.5 9.300l8.200-.8z" fill="#fde84e" stroke="#c9a51a" strokeWidth="1.300" />,
  segn: <><Sheet /><path d="M12 1h6v12l-3-3-3 3z" fill="#5f8fc4" /></>,
  homeProj: <><Folder f="#b9e36c" /><path d="M2 7l18 14M7 20l8-12" stroke="#f3fbd0" strokeWidth="2" /><circle cx="15.500" cy="9" r="4.500" fill="#158a2c" /><path d="M11.500 11l4 8 4-8z" fill="#158a2c" /></>,
  home: <><Folder f="#ff5126" /><path d="M6 14l6-5.500 6 5.500M8 13v6h8v-6" fill="none" stroke="#6d1a08" strokeWidth="1.300" /></>,
  cdrive: <Folder f="#1cff00" />,
  ddrive: <Folder f="#0000e6" />,
  gdrive: <Folder f="#1f78b4" />,
  gpkgS: <Globelet />,
  featherS: <Feather />,
  elephant: <path d="M1 6c1-4 6-5 10-4 5-1 11-1 12 5l-2 14h-5l-4-3-3 3-6-6z" fill="#5c86b3" stroke="#26466a" strokeWidth="1.500" />,
  brush: (
    <>
      <path d="M12 12L21 3l2.500 2L15 15z" fill="#d99a43" stroke="#9c651d" />
      <path d="M3 6l8 1 5 8-6 7C5 20 1 13 3 6z" fill="#dc4a3f" />
      <path d="M4 6l7 1 2 4-8 2c-1-2-2-5-1-7z" fill="#f9dc41" />
      <path d="M1 12l5 0 1 5-3 2z" fill="#5b8fd0" />
      <path d="M9 8l7 7-2 2.500L8 11z" fill="#c98a3a" />
    </>
  ),
  addGroup: <><path d="M2 8h11v14H2zM6 5h11v14H6zM10 2h11v14H10z" fill="#f1f1f1" stroke="#777" strokeWidth="1.300" /><path d="M12 1v12" stroke="#3f74ae" strokeWidth="2" /><Plus /></>,
  eye: <><path d="M1 11C6 4 17 4 22 11c-5 6-16 6-21 0z" fill="#fff" stroke="#888" strokeWidth="1.500" /><circle cx="12" cy="10.500" r="4.500" fill="#6a94c2" /><circle cx="12" cy="10.500" r="1.800" fill="#222" /><path d="M3 5C8 1 16 1 21 5" fill="none" stroke="#999" strokeWidth="1.300" /><path d="M17 18h7l-3.500 4z" fill="#444" /></>,
  epsHead: <><text x="0" y="16" fontSize="26" fontFamily="Noto Sans" fill="#6b3c7d">ε</text><path d="M12.500 22v-4c0-6 10-6 10 0v4M14 17v5M21 17v5" fill="none" stroke="#999" strokeWidth="2" /></>,
  newRow: <Gray><path d="M1 2h20v17H1z" fill="#eee" stroke="#888" /><path d="M1 2h20v5H1z" fill="#999" /><path d="M3 11h12M3 15h12" stroke="#999" strokeWidth="2" /><Spark c="#888" /></Gray>,
  epsSel: <><path d="M8 9h15v13H8z" fill="#ffe34a" stroke="#b99b14" /><text x="0" y="15" fontSize="22" fontWeight="600" fontFamily="Noto Sans" fill="#5d3476">ε</text></>,
  allRows: <path d="M2 2h20v5H2zM2 9.500h20v5H2zM2 17h20v5H2z" fill="#ffe34a" stroke="#b99b14" strokeWidth="1.200" />,
  invert: <><path d="M2 2h20v20H2z" fill="#eee" stroke="#999" /><path d="M2 2l20 20H2z" fill="#ffe34a" stroke="#b99b14" /></>,
  desel: <><path d="M2 2h14v14H2z" fill="#ffe34a" stroke="#b99b14" /><circle cx="18.500" cy="18.500" r="4.500" fill="#f6d0d0" stroke="#d5353b" strokeWidth="2" /><path d="M15.500 15.500l6 6" stroke="#d5353b" strokeWidth="1.600" /></>,
  moveTop: <><path d="M1 2h22v20H1z" fill="#fff" stroke="#5588bb" strokeWidth="1.500" /><path d="M1 2h22v5H1zM1 17h22v5H1z" fill="#6a9bcc" /><path d="M4 10h16M4 14h16" stroke="#b9cde2" strokeWidth="2" /><path d="M3 18.500h18" stroke="#e9d95a" strokeWidth="2" /><path d="M12 4l5 5h-3v8h-4V9H7z" fill="#3b6ea5" stroke="#234" strokeWidth=".6" /></>,
  panSel: <><path d="M5 5h14v14H5z" fill="#ffe34a" stroke="#c9b02b" /><path d="M12 .5l4 4.500h-2.500v4h-3V5H8zM12 23.500l4-4.500h-2.500v-4h-3v4H8zM.5 12L5 8v2.500h4v3H5V16zM23.500 12L19 8v2.500h-4v3h4V16z" fill="#4f7fb3" stroke="#2d5482" strokeWidth=".7" /></>,
  zoomSel: <><path d="M2 1h14v16H2z" fill="#ffe34a" stroke="#b99b14" /><Lens /></>,
  newCol: <Gray><path d="M2 1h6v21H2z" fill="#999" /><path d="M8 3h14v17H8zM12 3v17M17 3v17" fill="#eee" stroke="#888" /><Spark c="#888" /></Gray>,
  table: <TableGrid />,
  form: <><path d="M1 2h22v20H1z" fill="#eef4fa" stroke="#9dbbdd" strokeWidth="1.500" /><path d="M4 8h5M4 16h5" stroke="#555" strokeWidth="2" /><path d="M11 5h9v5h-9zM11 13h9v5h-9z" fill="#fff" stroke="#7da7d6" strokeWidth="1.500" /></>,
  satellite: (
    <>
      <path d="M2 5l8-3 12 14-5 6-8 1z" fill="#444" stroke="#222" />
      <path d="M5 4l12 17M9 3l12 15M4 9l8-5M6 14l9-6M9 19l9-7" stroke="#eee" strokeWidth="1.300" />
      <path d="M14 6l8-5M17 1l4 6M1 10l4 3" stroke="#333" strokeWidth="1.500" />
    </>
  ),
  lock: <><path d="M6.500 11V7.500c0-7 11-7 11 0V11" fill="none" stroke="#777" strokeWidth="2.200" /><rect x="3" y="10.500" width="18" height="12.500" rx="1.500" fill="#666" /></>,
  crs: <><ellipse cx="12" cy="12" rx="11" ry="10" fill="#888" /><path d="M12 2v20M1 12h22M3 7h18M4 17h16M12 2c-7 6-7 14 0 20M12 2c7 6 7 14 0 20" fill="none" stroke="#ccc" strokeWidth="1.100" /></>,
  bubble: <><path d="M12 3c14 0 14 15 4 16l6 4c-5 .5-8-1-9-3.500C-2 19-2 3 12 3z" fill="#555" /><circle cx="7" cy="11.500" r="1.600" fill="#eee" /><circle cx="12" cy="11.500" r="1.600" fill="#eee" /><circle cx="17" cy="11.500" r="1.600" fill="#eee" /></>,
  search: <><circle cx="10" cy="9.500" r="7" fill="none" stroke="#888" strokeWidth="1.800" /><path d="M15 15l7 7" stroke="#888" strokeWidth="2.500" /></>,
  qgis: (
    <>
      <circle cx="11.500" cy="11.500" r="8.800" fill="none" stroke="#76a832" strokeWidth="5" />
      <path d="M13 13h5.500l5 5.500V24h-5L13 18z" fill="#6a9c30" />
      <path d="M9 9h5l4 5-3 2-3-3-2 2z" fill="#ee7913" />
    </>
  ),
};

const Icon = ({ n, s = "size-6" }: { n: string; s?: string }) => (
  <svg viewBox="0 0 24 24" className={`${s} shrink-0 overflow-visible`}>{icons[n]}</svg>
);

/* ---------- toolbar primitives ---------- */

const Grip = () => (
  <svg className="h-[18px] w-1 shrink-0" viewBox="0 0 4 18">
    <path d="M.5 0v18M3.500 0v18" stroke="#b5b5b5" strokeDasharray="1 2" />
  </svg>
);
const HGrip = () => (
  <svg className="h-1 w-[17px] shrink-0" viewBox="0 0 17 4">
    <path d="M0 .5h17M0 3.500h17" stroke="#b5b5b5" strokeDasharray="1 2" />
  </svg>
);
const Down = () => (
  <svg className="h-1 w-[7px] shrink-0" viewBox="0 0 7 4"><path d="M0 0h7L3.500 4z" fill="#606060" /></svg>
);
const More = () => (
  <svg className="h-[7px] w-[9px] shrink-0" viewBox="0 0 9 7">
    <path d="M1 .7l2.500 2.800L1 6.300M5 .7l2.500 2.800L5 6.300" fill="none" stroke="#333" strokeWidth="1.200" />
  </svg>
);
const Sep = () => <div className="h-5 w-px shrink-0 bg-[#cfcfcf]" />;
const ShortSep = () => <div className="h-3 w-px shrink-0 bg-[#cfcfcf]" />;

type Item = [string, string];

/* each slot is as wide as the step from the previous item's centre */
const Bar = ({ items, size = "size-6" }: { items: Item[]; size?: string }) => (
  <>
    {items.map(([n, w], i) => (
      <div key={i} className={`flex h-full shrink-0 items-center justify-end ${w}`}>
        <div className="flex w-0 items-center justify-center">
          {n === "|" ? <Grip /> : n === ">" ? <More /> : n === "v" ? <Down /> : n === "-" ? <Sep /> : n === "_" ? <ShortSep /> : n === "QM" ? (
            <span className="font-['Open_Sans'] text-[15px] font-extrabold leading-none tracking-[0.3px] text-black">QM</span>
          ) : n === "hand" ? (
            <div className="flex h-[31px] w-8 shrink-0 items-center justify-center rounded-[3px] border border-[#a9a9a9] bg-[#dcdcdc]"><Icon n="hand" /></div>
          ) : (
            <Icon n={n} s={size} />
          )}
        </div>
      </div>
    ))}
  </>
);

const row1: Item[] = [
  ["|", "w-2"], ["page", "w-[22px]"], ["folder", "w-[33px]"], ["floppy", "w-[33px]"], ["layout", "w-[33px]"], ["tools", "w-[33px]"], ["style", "w-[33px]"],
  ["|", "w-[27px]"], ["hand", "w-[22px]"], ["pan", "w-[33px]"], ["zin", "w-[33px]"], ["zout", "w-[33px]"], ["zfull", "w-[33px]"], ["zsel", "w-[33px]"], ["zlayer", "w-[33px]"],
  ["znat", "w-[33px]"], ["zlast", "w-[33px]"], ["znext", "w-[33px]"], ["newmap", "w-[33px]"], ["map3d", "w-[33px]"], ["ribbon", "w-[35px]"], ["bookmark", "w-[31px]"],
  ["clock", "w-[33px]"], ["refresh", "w-[33px]"], ["|", "w-[27px]"], ["select", "w-[22px]"], ["v", "w-[22px]"], ["forms", "w-[24px]"], ["v", "w-[21px]"], [">", "w-[54px]"],
  ["|", "w-[16px]"], ["help", "w-[22px]"], ["|", "w-[27px]"], ["identify", "w-[22px]"], [">", "w-[24px]"], ["|", "w-[16px]"], ["redpen", "w-[22px]"], [">", "w-[24px]"],
  ["|", "w-[16px]"], ["greenmag", "w-[22px]"], [">", "w-[25px]"], ["|", "w-[15px]"], ["share", "w-[22px]"], ["|", "w-[26px]"], ["docs", "w-[23px]"], [">", "w-[24px]"],
  ["|", "w-[16px]"], ["sun", "w-[22px]"], ["|", "w-[26px]"], ["www", "w-[23px]"],
];
const row2: Item[] = [
  ["|", "w-2"], ["dsm", "w-[22px]"], ["gpkg", "w-[33px]"], ["vnew", "w-[33px]"], ["feather", "w-[33px]"], ["chip", "w-[34px]"], ["mesh", "w-[32px]"], ["-", "w-[21px]"],
  ["virtual", "w-[19px]"], ["-", "w-[21px]"], ["|", "w-[13px]"], ["pencils", "w-[22px]"], ["pencil", "w-[32px]"], ["floppyG", "w-[34px]"], ["blobStar", "w-[34px]"],
  ["vertexTool", "w-[33px]"], ["v", "w-[21px]"], ["editRows", "w-[23px]"], ["trash", "w-[32px]"], ["cut", "w-[34px]"], ["copy", "w-[33px]"], ["clip", "w-[33px]"],
  ["undo", "w-[33px]"], ["redo", "w-[33px]"], ["|", "w-[26px]"], ["globeAdd", "w-[24px]"], ["globeFind", "w-[32px]"], [">", "w-[36px]"], ["|", "w-[16px]"], ["QM", "w-[22px]"],
  [">", "w-[24px]"], ["|", "w-[16px]"], ["python", "w-[22px]"], [">", "w-[24px]"], ["|", "w-[16px]"], ["topo", "w-[22px]"], [">", "w-[24px]"], ["|", "w-[16px]"],
  ["curveG", "w-[22px]"], ["v", "w-[22px]"], [">", "w-[14px]"], ["|", "w-[16px]"], ["magnet", "w-[22px]"], [">", "w-[24px]"], ["|", "w-[16px]"], ["abc", "w-[21px]"],
  [">", "w-[25px]"], ["|", "w-[16px]"], ["aNew", "w-[22px]"], ["v", "w-[22px]"], [">", "w-[14px]"], ["|", "w-[16px]"], ["chart", "w-[22px]"], ["|", "w-[27px]"],
  ["meshEdit", "w-[22px]"], [">", "w-[25px]"],
];
const tableBar: Item[] = [
  ["pencil", "w-[16px]"], ["editRows", "w-[24px]"], ["floppyG", "w-[25px]"], ["refresh", "w-[26px]"], ["_", "w-[17px]"], ["newRow", "w-[16px]"], ["trash", "w-[24px]"],
  ["cut", "w-[25px]"], ["copy", "w-[25px]"], ["clip", "w-[25px]"], ["_", "w-[16px]"], ["epsSel", "w-[16px]"], ["allRows", "w-[25px]"], ["invert", "w-[25px]"], ["desel", "w-[25px]"],
  ["funnel", "w-[25px]"], ["moveTop", "w-[25px]"], ["panSel", "w-[25px]"], ["zoomSel", "w-[25px]"], ["_", "w-[17px]"], ["newCol", "w-[16px]"], [">", "w-[35px]"],
];
const side = [
  "arcG", "blobMove", "blobRot", "blobScale", "hex", "ring", "part", "fillRing", "ringDel", "partDel", "reshape", "offset", "simp", "crossLines", "scis", "scis", "merge", "snapRows", "triMove",
];

const menu: [string, string, string, string][] = [
  ["P", "r", "ogetto", "w-[69px]"], ["", "M", "odifica", "w-[70px]"], ["", "V", "isualizza", "w-[78px]"], ["", "L", "ayer", "w-[49px]"], ["", "I", "mpostazioni", "w-[96px]"],
  ["", "P", "lugins", "w-[61px]"], ["Vett", "o", "re", "w-[61px]"], ["", "R", "aster", "w-[56px]"], ["", "D", "atabase", "w-[75px]"], ["", "W", "eb", "w-[44px]"],
  ["", "M", "esh", "w-[50px]"], ["Pro", "c", "essing", "w-[84px]"], ["", "G", "uida", "w-[60px]"],
];

const DockButtons = () => (
  <div className="flex gap-[3px]">
    <svg className="size-[11px]" viewBox="0 0 11 11">
      <rect x=".5" y=".5" width="10" height="10" rx="2" fill="#f4f4f4" stroke="#666" />
      <path d="M4.500 5V2.500h4v4H6M2.500 4.500h4v4h-4z" fill="none" stroke="#555" />
    </svg>
    <svg className="size-[11px]" viewBox="0 0 11 11">
      <rect x=".5" y=".5" width="10" height="10" rx="2" fill="#f4f4f4" stroke="#666" />
      <path d="M3 3l5 5M8 3L3 8" stroke="#444" strokeWidth="1.800" />
    </svg>
  </div>
);

const tree: [string, string][] = [
  ["star", "Preferiti"], ["segn", "Segnalibri Spaziali"], ["homeProj", "Home Progetto"], ["home", "Home"], ["cdrive", "C:\\"], ["ddrive", "D:\\ (Volume)"],
  ["gdrive", "G:\\ (Google Drive)"], ["gpkgS", "GeoPackage"], ["featherS", "SpatiaLite"], ["elephant", "PostGIS"],
];

const Check = () => (
  <span className="flex size-[13px] shrink-0 items-center justify-center border border-[#b8b8b8] bg-white">
    <svg className="size-[9px]" viewBox="0 0 9 9"><path d="M1 4.500l2.300 3L8 .8" fill="none" stroke="#000" strokeWidth="1.800" /></svg>
  </span>
);

const AttributeTable = ({ title, rows, wide }: { title: string; rows: string[]; wide?: boolean }) => (
  <section className="flex w-[507px] shrink-0 flex-col">
    <div className={`flex h-[24px] items-center justify-between pl-2 ${wide ? "pr-[3px]" : "pr-[2px]"}`}>
      <span className="text-[14px] tracking-[0.42px]">{title}</span>
      <DockButtons />
    </div>
    <div className="flex h-[30px] items-center pb-1">
      <Bar items={tableBar} size="size-4" />
    </div>
    <div className="h-[228px] border border-[#b5b5b5] bg-white">
      <div className="flex h-[23px] bg-[#efefef]">
        <div className="w-[112px] border-b border-r border-[#b8b8b8] bg-linear-to-b from-[#fcfcfc] to-[#efefef] pl-3 text-center leading-[23px]">fid</div>
        <div className="w-[100px] border-b border-[#b8b8b8] bg-linear-to-b from-[#fcfcfc] to-[#efefef] text-center leading-[23px]">nome</div>
      </div>
      <div className="flex h-[203px]">
        <div className="w-3 bg-[#efefef]">
          {rows.map((r, i) => (
            <div key={r} className="h-[30px] border-b border-r border-[#a9a9a9] bg-linear-to-r from-[#fafafa] to-[#eee] pt-[2px] text-center leading-[28px]">{i + 1}</div>
          ))}
        </div>
        <div className="w-[200px]">
          {rows.map((r, i) => (
            <div key={r} className={`flex h-[30px] border-b border-[#c3c1bd] leading-[29px] ${i % 2 ? "bg-[#e9e7e3]" : "bg-white"}`}>
              <div className="w-[100px] border-r border-[#c3c1bd] pr-[3px] text-right">{i + 1}</div>
              <div className="w-[100px] border-r border-[#c3c1bd] pl-[3px] tracking-[0.2px]">{r}</div>
            </div>
          ))}
        </div>
      </div>
    </div>
    <div className={`flex h-[32px] items-center justify-between pl-[3px] ${wide ? "pr-1" : "pr-[3px]"}`}>
      <div className="flex h-[26px] w-[196px] items-center rounded-[3px] border border-[#a8a8a8] bg-linear-to-b from-white to-[#f0f0f0] pl-[3px]">
        <Icon n="table" s="size-[14px]" />
        <span className="ml-[3px] w-[166px] shrink-0 whitespace-nowrap text-[14px] tracking-[0.43px]">Mostra Tutti gli Elementi</span>
        <svg className="mt-4 h-[3px] w-[5px] shrink-0" viewBox="0 0 5 3"><path d="M0 0h5L2.500 3z" fill="#555" /></svg>
      </div>
      <div className="flex items-center gap-[5px]">
        <Icon n="form" s="size-[14px]" />
        <div className="flex h-[23px] w-6 items-center justify-center rounded-[3px] border border-[#a9a9a9] bg-[#dcdcdc]"><Icon n="table" s="size-[15px]" /></div>
      </div>
    </div>
  </section>
);

const Spin = () => (
  <div className="flex h-full w-[14px] flex-col items-center justify-center gap-[5px] border-l border-[#b5b5b5] bg-[#f6f6f6]">
    <svg className="h-1 w-[7px]" viewBox="0 0 7 4"><path d="M0 4h7L3.500 0z" fill="#606060" /></svg>
    <Down />
  </div>
);

/* fixed-width label whose text is centred and clipped on both sides */
const Clipped = ({ w, children }: { w: string; children: ReactNode }) => (
  <div className={`flex shrink-0 justify-center overflow-hidden whitespace-nowrap ${w}`}><span className="shrink-0">{children}</span></div>
);

const MapLabel = ({ x, y, children }: { x: number; y: number; children: string }) => (
  <text x={x} y={y} fontSize="23" fontFamily="Open Sans, Noto Sans, sans-serif" fill="#333" stroke="#fff" strokeWidth="4.500" strokeLinejoin="round" paintOrder="stroke" textLength="60">{children}</text>
);

export default function App() {
  return (
    <div className="relative flex h-[921px] w-[1363px] flex-col overflow-hidden border border-[#18171a] bg-[#efefef] font-['Lato',sans-serif] text-[14px] text-[#0a0a0a]">
      <header className="flex h-[30px] shrink-0 items-center bg-white pl-2">
        <Icon n="qgis" s="size-4" />
        <span className="ml-[5px] flex-1 font-['Open_Sans',sans-serif] text-[12px] tracking-[-0.42px]">*Etichetta_per_Sovrapposizione — QGIS</span>
        <svg className="mr-4 h-[11px] w-[103px]" viewBox="0 0 103 11">
          <path d="M0 5.500h10M45.500.5h9v9h-9zM91.500.5l10 10M101.500.5l-10 10" fill="none" stroke="#000" />
        </svg>
      </header>
      <nav className="flex h-6 shrink-0 items-center border-b border-[#d0d0d0] pl-[10px]">
        {menu.map(([a, u, b, w], i) => (
          <span key={i} className={`shrink-0 whitespace-nowrap text-[14px] tracking-[0.3px] ${w}`}>{a}<span className="underline underline-offset-2">{u}</span>{b}</span>
        ))}
      </nav>
      <div className="flex h-[39px] shrink-0 items-center overflow-hidden border-b border-[#b5b5b5] bg-linear-to-b from-[#fbfbfb] to-[#eee]"><div className="-ml-px flex h-full items-center"><Bar items={row1} /></div></div>
      <div className="flex h-[39px] shrink-0 items-center overflow-hidden border-b border-[#b5b5b5] bg-linear-to-b from-[#fbfbfb] to-[#eee]"><div className="-ml-px flex h-full items-center"><Bar items={row2} /></div></div>

      <main className="flex h-[755px] shrink-0">
        <aside className="flex w-[51px] shrink-0 flex-col items-center border-r border-[#b5b5b5] bg-linear-to-r from-[#fcfcfc] to-[#ececec] pt-[5px]">
          <HGrip />
          <div className="mt-[3px] flex h-8 w-full items-center pl-[14px]"><Icon n="setsquare" /></div>
          {side.map((n, i) => (
            <div key={i} className={`flex h-8 w-full shrink-0 items-center ${i < 2 || i === 18 ? "pl-[10px]" : "pl-[15px]"}`}>
              <Icon n={n} s="size-[23px]" />
              {(i < 2 || i === 18) && <span className="ml-[5px] opacity-60"><Down /></span>}
            </div>
          ))}
        </aside>

        <div className="flex w-[291px] shrink-0 flex-col pl-[1px] pr-[6px]">
          <div className="flex h-[21px] items-center justify-between pl-1 pr-[2px]">
            <span className="tracking-[0.35px]">Browser</span>
            <DockButtons />
          </div>
          <div className="flex h-[31px] items-center pb-[2px]"><Bar size="size-4" items={[["addLayer", "w-[16px]"], ["refresh", "w-[25px]"], ["funnel", "w-[25px]"], ["treeUp", "w-[25px]"], ["info", "w-[25px]"]]} /></div>
          <div className="flex h-[198px] overflow-hidden border border-[#b5b5b5] bg-white">
            <div className="flex-1 overflow-hidden">
              {tree.map(([ic, t]) => (
                <div key={t} className="flex h-[21px] items-center pl-[6px]">
                  <svg className="h-[7px] w-1" viewBox="0 0 4 7"><path d="M0 0v7l4-3.500z" fill="#555" /></svg>
                  <span className="ml-[9px] flex"><Icon n={ic} s="size-4" /></span>
                  <span className="ml-[6px] whitespace-nowrap tracking-[0.4px]">{t}</span>
                </div>
              ))}
            </div>
            <div className="flex w-[14px] flex-col border-l border-[#b5b5b5] bg-[#e4e4e4]">
              <div className="flex h-[13px] items-center justify-center border-b border-[#b5b5b5] bg-[#f6f6f6]"><svg className="h-1 w-[7px]" viewBox="0 0 7 4"><path d="M0 4h7L3.500 0z" fill="#444" /></svg></div>
              <div className="h-[81px] border-b border-[#b5b5b5] bg-[#fafafa]" />
              <div className="flex-1" />
              <div className="flex h-[14px] items-center justify-center border-t border-[#b5b5b5] bg-[#f6f6f6]"><Down /></div>
            </div>
          </div>
          <div className="flex h-[4px] items-center justify-center"><HGrip /></div>
          <div className="flex h-6 items-center justify-between pl-1 pr-[2px]">
            <span className="tracking-[0.35px]">Layer</span>
            <DockButtons />
          </div>
          <div className="flex h-[30px] items-center pb-1"><Bar size="size-4" items={[["brush", "w-[16px]"], ["addGroup", "w-[25px]"], ["eye", "w-[26px]"], ["funnelD", "w-[25px]"], ["epsHead", "w-[25px]"], ["v", "w-[17px]"], ["treeDown", "w-[19px]"], ["treeUp", "w-[25px]"], ["removeLayer", "w-[25px]"]]} /></div>
          <div className="flex-1 border border-[#b5b5b5] bg-white">
            <div className="flex h-[21px] items-center pl-[23px]"><Check /><span className="ml-[9px] size-[12px] rounded-full bg-black" /><span className="ml-2 font-bold tracking-[0.6px]">punti</span></div>
            <div className="flex h-[21px] items-center bg-[#efefef] pl-[23px]"><Check /><span className="ml-[7px] size-4 border border-[#4f5a6e] bg-[#76686d]" /><span className="ml-[6px] font-bold tracking-[0.8px] underline underline-offset-2">Poligoni</span></div>
          </div>
        </div>

        <div className="flex w-[1019px] shrink-0 flex-col">
          <svg className="h-[437px] w-[1019px] shrink-0 border border-[#b5b5b5] bg-white" viewBox="344 134 1017 435">
            <path d="M602.500 281.500L751 409.500l-43.500 70.500L514 384.500z" fill="#91522d" stroke="#222" strokeWidth=".9" />
            <path d="M1048 237l83.500 126.500L961.500 319.500z" fill="#91522d" stroke="#222" strokeWidth=".9" />
            <g>
              <circle cx="536" cy="223" r="7" /><circle cx="869" cy="182" r="7" /><circle cx="957" cy="529" r="7" />
              <circle cx="600" cy="341" r="7.600" stroke="#fff" strokeWidth="1.500" /><circle cx="1060" cy="306" r="7.600" stroke="#fff" strokeWidth="1.500" />
            </g>
            <MapLabel x={606} y={393}>A_pol</MapLabel>
            <MapLabel x={985} y={301}>B_pol</MapLabel>
          </svg>
          <div className="flex h-[5px] items-center justify-center"><HGrip /></div>
          <div className="flex gap-[6px]">
            <AttributeTable title="punti — Elementi Totali: 6, Filtrati: 6, Selezionati: 0" rows={["punto 1", "punto 2", "punto 3", "punto 4", "punto 5", "punto 6"]} />
            <AttributeTable wide title="Poligoni — Elementi Totali: 2, Filtrati: 2, Selezionati: 0" rows={["A_pol", "B_pol"]} />
          </div>
        </div>
      </main>

      <footer className="flex h-8 shrink-0 items-center pl-1 text-[14px] tracking-[0.15px]">
        <div className="flex h-[27px] w-[253px] shrink-0 items-center rounded-[3px] border border-[#a8a8a8] bg-white pl-2 text-[#7d7d7d]"><Icon n="search" s="size-[13px]" /><span className="ml-[7px] tracking-[0.36px]">Digita per localizzare (Ctrl+K)</span></div>
        <div className="w-[47px] shrink-0" />
        <Clipped w="w-[63px]"><span className="tracking-[0.4px]">Coordinate</span></Clipped>
        <div className="ml-[3px] flex h-[27px] w-[147px] shrink-0 items-center rounded-[3px] border border-[#a8a8a8] bg-white pl-[6px] tracking-[0.04px]">515477,8 4344400,4</div>
        <div className="ml-[3px] flex"><Icon n="satellite" s="size-4" /></div>
        <div className="w-[13px] shrink-0" />
        <Clipped w="w-[26px]"><span className="tracking-[0.5px]">Scala</span></Clipped>
        <div className="ml-[3px] flex h-[27px] w-[97px] shrink-0 items-center rounded-[3px] border border-[#a8a8a8] bg-white pl-[3px]"><span className="flex-1 tracking-[0px]">1:1217</span><div className="flex h-full w-5 items-center justify-center border-l border-[#b5b5b5] bg-[#f4f4f4]"><Down /></div></div>
        <div className="ml-[10px] flex"><Icon n="lock" s="size-4" /></div>
        <div className="w-[7px] shrink-0" />
        <Clipped w="w-[138px]"><span className="tracking-[0.5px]">Lente d'ingrandimento</span></Clipped>
        <div className="ml-[3px] flex h-[25px] w-[84px] shrink-0 items-center rounded-[3px] border border-[#a8a8a8] bg-white pl-[4px]"><span className="flex-1">100%</span><Spin /></div>
        <div className="w-[9px] shrink-0" />
        <Clipped w="w-[57px]"><span className="tracking-[0.5px]">Rotazione</span></Clipped>
        <div className="ml-[8px] flex h-[25px] w-[84px] shrink-0 items-center rounded-[3px] border border-[#a8a8a8] bg-white pl-[4px]"><span className="flex-1">0,0 °</span><Spin /></div>
        <div className="ml-[6px] flex"><Check /></div>
        <span className="ml-[6px] w-[79px] shrink-0 tracking-[0.35px]">Visualizza</span>
        <Icon n="crs" s="size-[15px]" />
        <span className="ml-[2px] w-[100px] shrink-0 tracking-[-0.15px]">EPSG:25832</span>
        <div className="ml-[2px] flex"><Icon n="bubble" s="size-[17px]" /></div>
        <svg className="ml-auto mr-px mt-4 size-[11px]" viewBox="0 0 11 11"><path d="M8 1.500h2M5 4.500h5M2 7.500h8M0 10.500h10" stroke="#bbb" strokeDasharray="1 2" /></svg>
      </footer>

      <svg className="pointer-events-none absolute left-[599px] top-[599px] h-[220px] w-[520px] overflow-visible" viewBox="600 600 520 220">
        <g className="drop-shadow-[3px_4px_3px_rgba(0,0,0,0.4)]">
          <rect x="963.500" y="624.500" width="119.500" height="96.500" rx="5" fill="none" stroke="#f40000" strokeWidth="2.200" />
          <path d="M1022 735C985 770 955 797 910 797C860 797 780 752 642 703" fill="none" stroke="#f60000" strokeWidth="4.500" />
          <path d="M624 698l25-1.500-6.500 17.500z" fill="#f60000" />
        </g>
      </svg>
    </div>
  );
}
